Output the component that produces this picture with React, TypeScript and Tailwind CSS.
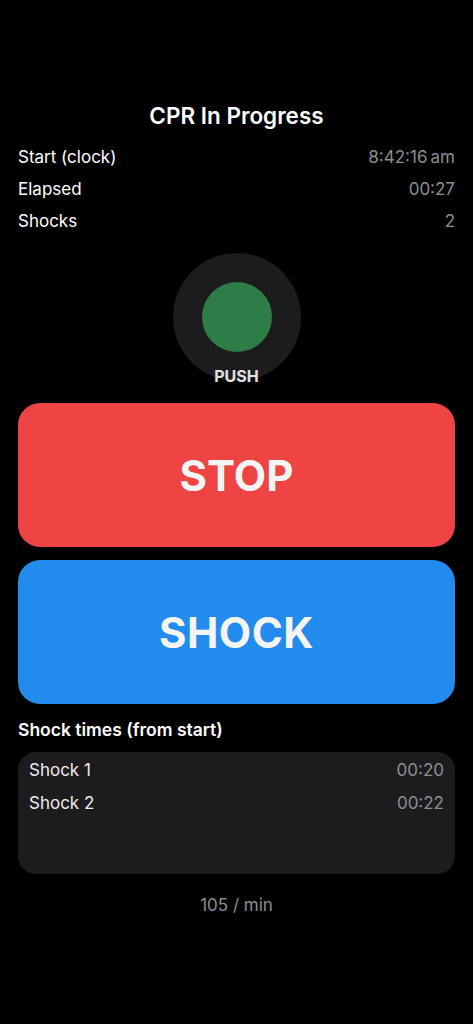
import React from 'react';

const stats = [
  { label: 'Start (clock)', value: '8:42:16\u2009am' },
  { label: 'Elapsed', value: '00:27' },
  { label: 'Shocks', value: '2' },
];

const shocks = [
  { label: 'Shock 1', time: '00:20' },
  { label: 'Shock 2', time: '00:22' },
];

export default function App() {
  return (
    <div
      className="min-h-[1024px] w-full bg-black text-white px-[18px] pt-[102px]"
      style={{ fontFamily: 'Inter, "Noto Sans", sans-serif' }}
    >
      <h1 className="h-[28px] leading-[28px] text-center text-[22.5px] font-semibold">CPR In Progress</h1>

      {/* Stats */}
      <div className="mt-[12px]">
        {stats.map((s) => (
          <div key={s.label} className="h-[32px] flex items-center justify-between text-[17px]">
            <span className="text-white">{s.label}</span>
            <span className="text-[#8d8d92]">{s.value}</span>
          </div>
        ))}
      </div>

      {/* Pulse indicator */}
      <div className="mt-[15px] flex flex-col items-center">
        <div className="w-[128px] h-[128px] rounded-full bg-[#1c1c1e] flex items-center justify-center">
          <div className="w-[70px] h-[70px] rounded-full bg-[#2e7d46]" />
        </div>
        <div className="relative -mt-[15px] h-[20px] leading-[20px] text-[16px] font-bold text-[#e0e0e0]">PUSH</div>
      </div>

      {/* Action buttons */}
      <button className="mt-[17px] w-full h-[144px] rounded-[22px] bg-[#ef4444] flex items-center justify-center">
        <span className="text-[42px] font-bold text-[#f5f5f5]">STOP</span>
      </button>
      <button className="mt-[13px] w-full h-[144px] rounded-[22px] bg-[#248bee] flex items-center justify-center">
        <span className="text-[42px] font-bold tracking-[0.5px] text-[#f5f5f5]">SHOCK</span>
      </button>

      {/* Shock list */}
      <h2 className="mt-[15px] h-[22px] leading-[22px] text-[17.5px] font-semibold">Shock times (from start)</h2>
      <div className="mt-[11px] h-[122px] rounded-[18px] bg-[#1c1c1e] px-[11px] pt-[2px]">
        {shocks.map((s) => (
          <div key={s.label} className="h-[33px] flex items-center justify-between text-[17px]">
            <span className="text-[#ececec]">{s.label}</span>
            <span className="text-[#8d8d92]">{s.time}</span>
          </div>
        ))}
      </div>

      <div className="mt-[19px] h-[24px] leading-[24px] text-center text-[17px] text-[#8d8d92]">105 / min</div>
    </div>
  );
}
